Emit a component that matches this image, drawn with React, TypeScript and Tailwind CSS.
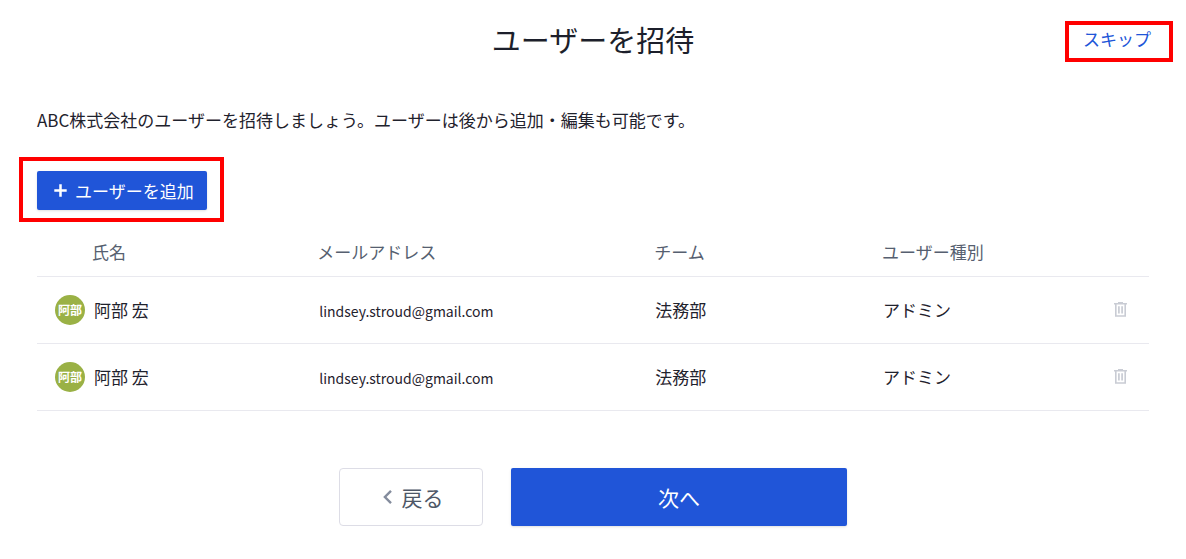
import React from "react";

interface User {
  id: number;
  initials: string;
  name: string;
  email: string;
  team: string;
  role: string;
}

const users: User[] = [
  { id: 1, initials: "阿部", name: "阿部 宏", email: "lindsey.stroud@gmail.com", team: "法務部", role: "アドミン" },
  { id: 2, initials: "阿部", name: "阿部 宏", email: "lindsey.stroud@gmail.com", team: "法務部", role: "アドミン" },
];

function PlusIcon() {
  return (
    <svg width="13" height="13" viewBox="0 0 13 13" aria-hidden="true">
      <path d="M6.5 0.3v12.4M0.3 6.5h12.4" fill="none" stroke="currentColor" strokeWidth="2.5" />
    </svg>
  );
}

function ChevronIcon() {
  return (
    <svg width="9" height="14" viewBox="0 0 9 14" aria-hidden="true">
      <path d="M8 0.9L1.9 7L8 13.1" fill="none" stroke="currentColor" strokeWidth="2.4" />
    </svg>
  );
}

function TrashIcon() {
  return (
    <svg width="13" height="15" viewBox="0 0 13 15" aria-hidden="true">
      <path d="M4 0h5v1.4H4z" fill="currentColor" />
      <path d="M0 1.8h13M1.8 2v12h9.4V2" fill="none" stroke="currentColor" strokeWidth="1.6" />
      <path d="M4.9 4.2v7.4M8.1 4.2v7.4" fill="none" stroke="currentColor" strokeWidth="1.7" />
    </svg>
  );
}

function UserRow({ user }: { user: User }) {
  return (
    <tr className="h-[67px] border-b border-[#e9e9ef]">
      <td className="pl-[18px]">
        <div className="flex items-center gap-[9px]">
          <span className="flex h-[30px] w-[30px] items-center justify-center rounded-full bg-[#9ab145] text-xs font-bold text-white">
            {user.initials}
          </span>
          <span>{user.name}</span>
        </div>
      </td>
      <td className="pl-0.5 pt-0.5 text-sm">{user.email}</td>
      <td className="pl-px">{user.team}</td>
      <td className="pl-px">{user.role}</td>
      <td className="pr-[22px]">
        <button type="button" aria-label="削除" className="ml-auto block text-[#c9ccd4]">
          <TrashIcon />
        </button>
      </td>
    </tr>
  );
}

export default function App() {
  return (
    <div className="min-h-screen bg-white pb-8 font-['Noto_Sans_CJK_JP',sans-serif] text-[17px] leading-6 text-[#1f222d]">
      <header className="grid grid-cols-[1fr_auto_1fr] items-start px-[13px] pt-[21px]">
        <h1 className="col-start-2 text-[29px] leading-9 text-[#1c1f2b]">ユーザーを招待</h1>
        <div className="justify-self-end border-4 border-[#ff0000] pt-0.5 pr-[18px] pb-[7px] pl-[14px]">
          <a href="#skip" className="block text-[#2055d8]">
            スキップ
          </a>
        </div>
      </header>

      <main className="px-[37px] pt-[46px]">
        <p>ABC株式会社のユーザーを招待しましょう。ユーザーは後から追加・編集も可能です。</p>

        <div className="-ml-[18px] mt-[25px] w-fit border-4 border-[#ff0000] pt-[10px] pr-[13px] pb-2 pl-[14px]">
          <button
            type="button"
            className="flex h-[39px] items-center gap-2 rounded-xs bg-[#2055d8] pr-[13px] pl-[17px] text-white shadow-sm"
          >
            <PlusIcon />
            ユーザーを追加
          </button>
        </div>

        <table className="mt-[7px] w-full table-fixed border-collapse text-left">
          <colgroup>
            <col className="w-[25.2%]" />
            <col className="w-[30.3%]" />
            <col className="w-[20.5%]" />
            <col className="w-[16%]" />
            <col className="w-[8%]" />
          </colgroup>
          <thead>
            <tr className="h-[47px] border-b border-[#e9e9ef] text-[#565f70]">
              <th className="pl-[55px] font-normal">氏名</th>
              <th className="font-normal">メールアドレス</th>
              <th className="font-normal">チーム</th>
              <th className="font-normal">ユーザー種別</th>
              <td></td>
            </tr>
          </thead>
          <tbody>
            {users.map((user) => (
              <UserRow key={user.id} user={user} />
            ))}
          </tbody>
        </table>

        <div className="mt-[57px] flex justify-center gap-7 text-[21px]">
          <button
            type="button"
            className="flex h-[58px] w-36 items-center justify-center gap-[10px] rounded border border-[#dddde6] pl-1 text-[#4e5767]"
          >
            <span className="text-[#848c9d]">
              <ChevronIcon />
            </span>
            戻る
          </button>
          <button type="button" className="h-[58px] w-[336px] rounded-xs bg-[#2055d8] text-white shadow-sm">
            次へ
          </button>
        </div>
      </main>
    </div>
  );
}
